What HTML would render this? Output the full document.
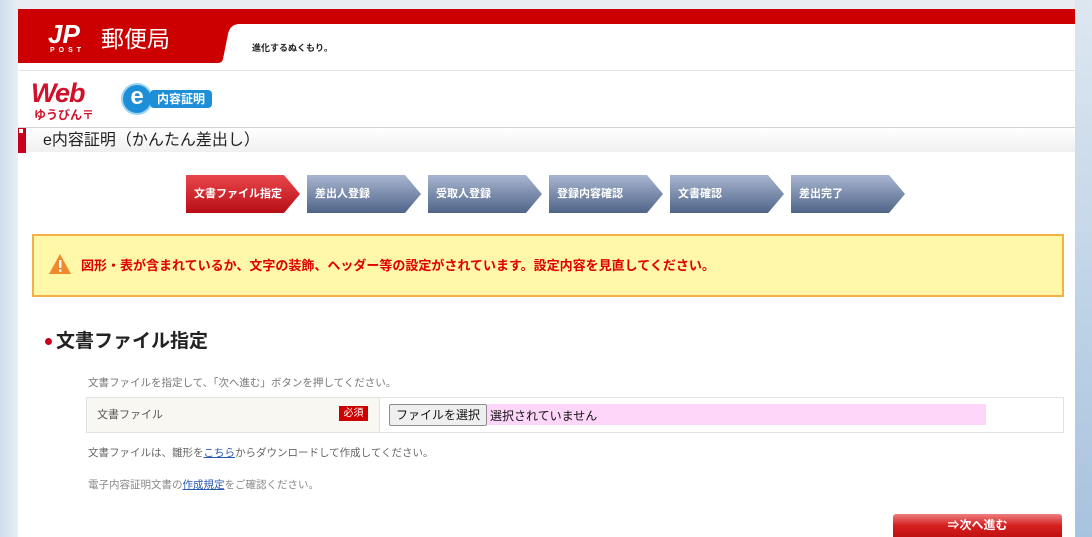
<!DOCTYPE html>
<html><head><meta charset="utf-8"><style>
body{margin:0;width:1092px;height:537px;overflow:hidden;background:linear-gradient(90deg,#cfdceb,#e6eef6 17px);font-family:"Liberation Sans","Noto Sans CJK JP",sans-serif;position:relative}
.bgr{position:absolute;right:0;top:0;width:17px;height:537px;background:linear-gradient(180deg,#dde7f1,#a8c3de)}
.page{position:absolute;left:18px;top:0;width:1057px;height:537px;background:#fff}
.abs{position:absolute}
.step{position:absolute;top:175px;height:38px;color:#fff;font-size:11px;font-weight:bold;line-height:38px}
.step svg{position:absolute;left:0;top:0}
.step span{position:relative;padding-left:8px}
</style></head><body>
<div class="bgr"></div>
<div class="page">
 <div class="abs" style="left:0;top:0;width:1057px;height:9px;background:#e9edf2"></div>
 <div class="abs" style="left:0;top:9px;width:1057px;height:15px;background:#cc0000"></div>
 <svg class="abs" style="left:0;top:9px" width="240" height="55"><path d="M0 0H240V15H222Q212 15 210 25L205 50Q204 54 200 54H0Z" fill="#cc0000"/></svg>
 <div class="abs" style="left:30px;top:21px;color:#fff;font-size:26px;font-weight:bold;font-style:italic;line-height:26px">JP</div>
 <div class="abs" style="left:32px;top:47px;color:#fff;font-size:7px;font-weight:bold;letter-spacing:4px">POST</div>
 <div class="abs" style="left:83px;top:25px;color:#fff;font-size:23px;line-height:28px">郵便局</div>
 <div class="abs" style="left:234px;top:41px;color:#222;font-size:9px;font-weight:bold">進化するぬくもり。</div>
 <div class="abs" style="left:0;top:70px;width:1057px;height:1px;background:#e4e4e4"></div>
 <div class="abs" style="left:13px;top:78px;color:#d0112b;font-size:27px;font-weight:bold;font-style:italic;line-height:30px;letter-spacing:-1px">Web</div>
 <div class="abs" style="left:16px;top:106px;color:#d0112b;font-size:12px;font-weight:bold">ゆうびん〒</div>
 <div class="abs" style="left:103px;top:83px;width:28px;height:28px;border-radius:50%;background:#1d8fd8;border:2px solid #9ed3f4;color:#fff;font-size:24px;font-weight:bold;text-align:center;line-height:24px">e</div>
 <div class="abs" style="left:132px;top:90px;width:62px;height:18px;background:#1d8fd8;border-radius:4px;color:#fff;font-size:12px;font-weight:bold;line-height:18px;text-align:center">内容証明</div>
 <div class="abs" style="left:0;top:127px;width:1057px;height:1px;background:#d4d4d4"></div>
 <div class="abs" style="left:0;top:128px;width:1057px;height:24px;background:linear-gradient(#fff,#f0f0f0)"></div>
 <div class="abs" style="left:0;top:128px;width:8px;height:25px;background:#c8001e"></div>
 <div class="abs" style="left:1px;top:129px;width:4px;height:4px;background:#fff"></div>
 <div class="abs" style="left:25px;top:130px;color:#222;font-size:16px;line-height:22px">e内容証明（かんたん差出し）</div>

 <div class="step" style="left:168px;width:118px"><svg width="118" height="38"><defs><linearGradient id="r" x1="0" y1="0" x2="0" y2="1"><stop offset="0" stop-color="#e8474c"/><stop offset="1" stop-color="#b80d15"/></linearGradient></defs><path d="M0 0H98L114 19L98 38H0Z" fill="url(#r)"/></svg><span>文書ファイル指定</span></div>
 <div class="step" style="left:289px;width:118px"><svg width="118" height="38"><defs><linearGradient id="b" x1="0" y1="0" x2="0" y2="1"><stop offset="0" stop-color="#a8b5d0"/><stop offset="1" stop-color="#4f6588"/></linearGradient></defs><path d="M0 0H98L114 19L98 38H0Z" fill="url(#b)"/></svg><span>差出人登録</span></div>
 <div class="step" style="left:410px;width:118px"><svg width="118" height="38"><path d="M0 0H98L114 19L98 38H0Z" fill="url(#b)"/></svg><span>受取人登録</span></div>
 <div class="step" style="left:531px;width:118px"><svg width="118" height="38"><path d="M0 0H98L114 19L98 38H0Z" fill="url(#b)"/></svg><span>登録内容確認</span></div>
 <div class="step" style="left:652px;width:118px"><svg width="118" height="38"><path d="M0 0H98L114 19L98 38H0Z" fill="url(#b)"/></svg><span>文書確認</span></div>
 <div class="step" style="left:773px;width:118px"><svg width="118" height="38"><path d="M0 0H98L114 19L98 38H0Z" fill="url(#b)"/></svg><span>差出完了</span></div>

 <div class="abs" style="left:14px;top:234px;width:1028px;height:59px;background:#fff8a8;border:2px solid #f4b042"></div>
 <svg class="abs" style="left:30px;top:253px" width="24" height="22"><path d="M12 1L23 21H1Z" fill="#f0892e"/><rect x="11" y="7" width="2.4" height="8" fill="#fff"/><rect x="11" y="16.5" width="2.4" height="2.4" fill="#fff"/></svg>
 <div class="abs" style="left:63px;top:257px;color:#e00000;font-size:13px;font-weight:bold;line-height:18px">図形・表が含まれているか、文字の装飾、ヘッダー等の設定がされています。設定内容を見直してください。</div>

 <div class="abs" style="left:27px;top:338px;width:7px;height:7px;border-radius:50%;background:#c8001e"></div>
 <div class="abs" style="left:38px;top:329px;color:#222;font-size:19px;font-weight:bold;line-height:26px">文書ファイル指定</div>
 <div class="abs" style="left:70px;top:375px;color:#777;font-size:10.5px">文書ファイルを指定して、「次へ進む」ボタンを押してください。</div>
 <div class="abs" style="left:68px;top:397px;width:976px;height:34px;border:1px solid #e2e2e2"></div>
 <div class="abs" style="left:69px;top:398px;width:292px;height:34px;background:#f8f7f1;border-right:1px solid #e2e2e2"></div>
 <div class="abs" style="left:79px;top:406px;color:#555;font-size:11px">文書ファイル</div>
 <div class="abs" style="left:321px;top:406px;width:29px;height:15px;background:#cc0000;color:#fff;font-size:10px;line-height:15px;text-align:center">必須</div>
 <div class="abs" style="left:469px;top:404px;width:499px;height:21px;background:#fdd6fa"></div>
 <div class="abs" style="left:371px;top:404px;width:96px;height:20px;border:1px solid #8e8e8e;background:#efefef;border-radius:2px;font-size:12px;line-height:20px;text-align:center;color:#111">ファイルを選択</div>
 <div class="abs" style="left:472px;top:407px;font-size:12px;color:#111">選択されていません</div>
 <div class="abs" style="left:70px;top:445px;color:#666;font-size:10.5px">文書ファイルは、雛形を<span style="color:#2a5ab0;text-decoration:underline">こちら</span>からダウンロードして作成してください。</div>
 <div class="abs" style="left:70px;top:477px;color:#888;font-size:10.5px">電子内容証明文書の<span style="color:#2a5ab0;text-decoration:underline">作成規定</span>をご確認ください。</div>
 <div class="abs" style="left:875px;top:514px;width:169px;height:23px;border-radius:3px 3px 0 0;background:linear-gradient(#ee7e7e,#d62020 50%,#c01010);color:#fff;font-size:12px;font-weight:bold;text-align:center;line-height:22px">⇒次へ進む</div>
</div>
</body></html>
